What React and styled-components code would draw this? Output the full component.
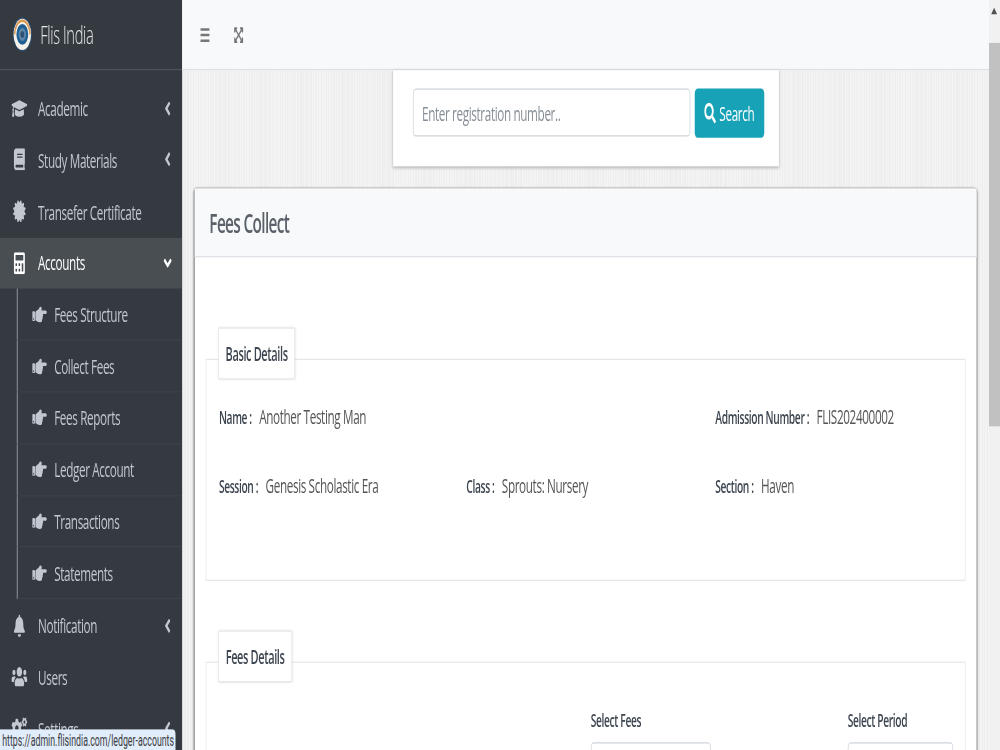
import React from 'react';
import styled, { createGlobalStyle } from 'styled-components';
import {
  FaGraduationCap, FaBook, FaCertificate, FaCalculator, FaHandPointRight, FaBell, FaUsers, FaCogs,
  FaAngleLeft, FaAngleDown, FaBars, FaExpandArrowsAlt, FaSearch,
} from 'react-icons/fa';

const GlobalStyle = createGlobalStyle`
  html, body {
    margin: 0;
    height: 100%;
    overflow: hidden;
    background: #f0f0f0;
  }
  * { box-sizing: border-box; }
`;

// the screenshot is a 1366x577 page squeezed into 1000x750
const Frame = styled.div`
  width: 1366px;
  height: 577px;
  display: grid;
  grid-template-columns: 249px 1fr 15px;
  overflow: hidden;
  position: relative;
  transform: scale(0.73206, 1.2998);
  transform-origin: 0 0;
  font-family: "Open Sans", "Liberation Sans", sans-serif;
  font-size: 16px;
  letter-spacing: -0.5px;
  color: #555;
`;

const Sidebar = styled.aside`
  background: #343a40;
  color: #c2c7d0;
  overflow: hidden;
  box-shadow: 0 2px 6px rgba(0, 0, 0, 0.3);
`;

const Brand = styled.div`
  height: 54px;
  display: flex;
  align-items: center;
  gap: 11px;
  padding-left: 17px;
  border-bottom: 1px solid #4b545c;
  font-size: 20px;
  font-weight: 300;
  color: #e4e7ea;
`;

const Nav = styled.nav`
  margin-top: 9.2px;
`;

const NavItem = styled.div`
  height: 39.8px;
  display: flex;
  align-items: center;
  padding: 0 14px 0 15px;
  background: ${p => (p.$active ? '#494e53' : 'transparent')};
  color: ${p => (p.$active ? '#fff' : '#c2c7d0')};
  svg.main { width: 23px; height: 17px; margin-right: 14px; flex: none; }
  svg.caret { width: 12px; height: 17px; margin-left: auto; }
`;

const SubMenu = styled.div`
  margin-left: 23px;
  border-left: 1px solid #aeb4bb;
`;

const SubItem = styled.div`
  height: 39.8px;
  display: flex;
  align-items: center;
  padding-left: 20px;
  border-bottom: 1px solid #3c4248;
  svg { width: 20px; height: 16px; margin-right: 10px; flex: none; }
`;

const Main = styled.main`
  min-width: 0;
  background: repeating-linear-gradient(
    90deg,
    #eeeeee 0 2px,
    #f4f4f4 2px 3px,
    #efefef 3px 5px,
    #f3f3f3 5px 7px
  );
`;

const Topbar = styled.header`
  height: 54px;
  display: flex;
  align-items: center;
  gap: 32px;
  padding-left: 24px;
  background: #f8f9fa;
  border-bottom: 1px solid #dee2e6;
  color: #777;
  svg { width: 14px; height: 14px; }
`;

const SearchCard = styled.form`
  width: 527px;
  height: 74px;
  margin: 0 auto;
  padding: 14px 20px 0 27px;
  display: flex;
  gap: 6px;
  background: #fff;
  box-shadow: 0 1px 3px rgba(0, 0, 0, 0.25);
`;

const SearchInput = styled.input`
  width: 379px;
  height: 37px;
  padding: 0 12px;
  border: 1px solid #ced4da;
  border-radius: 4px;
  font: inherit;
  letter-spacing: inherit;
  &::placeholder { color: #868e96; opacity: 1; }
`;

const SearchButton = styled.button`
  width: 95px;
  height: 38px;
  display: flex;
  align-items: center;
  justify-content: center;
  gap: 5px;
  border: 0;
  border-radius: 4px;
  background: #17a2b8;
  color: #fff;
  font: inherit;
  letter-spacing: inherit;
`;

const Card = styled.section`
  margin: 17px 17px 0 17px;
  background: #fff;
  border-radius: 4px 4px 0 0;
  box-shadow: 0 0 2px rgba(0, 0, 0, 0.45), 0 1px 3px rgba(0, 0, 0, 0.3);
`;

const CardHeader = styled.div`
  height: 53px;
  display: flex;
  align-items: center;
  padding-left: 20px;
  background: #f8f9fa;
  border-bottom: 1px solid #dee2e6;
  font-size: 21px;
  font-weight: 600;
  letter-spacing: -0.9px;
  color: #5a6169;
`;

const CardBody = styled.div`
  padding: 78px 15px 0;
`;

const Group = styled.div`
  height: ${p => p.$height};
  margin-bottom: 62px;
  border: 1px solid #e6e8ea;
`;

const Legend = styled.div`
  width: ${p => p.$width};
  height: 40px;
  margin: -25.5px 0 0 16px;
  display: flex;
  align-items: center;
  justify-content: center;
  background: #fff;
  border: 1px solid #e6e8ea;
  border-radius: 2px;
  box-shadow: 0 0 2px rgba(0, 0, 0, 0.08);
  font-size: 15px;
  font-weight: 600;
  color: #3d4650;
`;

const Details = styled.div`
  display: grid;
  grid-template-columns: 338px 340px 1fr;
  grid-auto-rows: 53px;
  padding: 1.5px 0 0 17px;
  align-items: center;
`;

const Detail = styled.div`
  grid-column: ${p => p.$col || 'auto'};
  display: flex;
  align-items: baseline;
  gap: 10px;
  white-space: nowrap;
  b { font-size: 14px; font-weight: 600; color: #3d4650; }
`;

const FeeFields = styled.div`
  display: grid;
  grid-template-columns: 351px 144px;
  margin-left: 525px;
  padding-top: 16px;
`;

const FieldLabel = styled.label`
  display: block;
  height: 30.5px;
  line-height: 26px;
  font-size: 14px;
  font-weight: 600;
  color: #3d4650;
`;

const SelectBox = styled.div`
  width: ${p => p.$width};
  height: 38px;
  border: 1px solid #ced4da;
  border-radius: 4px;
`;

const Scrollbar = styled.div`
  position: relative;
  background: #f1f1f1;
`;

const Thumb = styled.div`
  margin-top: 33px;
  height: 295px;
  background: #c1c1c1;
`;

const Arrow = styled.span`
  position: absolute;
  left: 3px;
  ${p => (p.$down ? 'bottom: 3px;' : 'top: 6px;')}
  border-left: 4px solid transparent;
  border-right: 4px solid transparent;
  ${p => (p.$down ? 'border-top' : 'border-bottom')}: 5px solid #505050;
`;

const StatusTip = styled.div`
  position: absolute;
  left: 0;
  bottom: 0;
  width: 240px;
  height: 16px;
  padding-left: 3px;
  background: #e2edfb;
  border-top-right-radius: 4px;
  font-family: "Roboto", sans-serif;
  font-size: 12px;
  line-height: 18px;
  letter-spacing: 0;
  color: #3c4043;
  white-space: nowrap;
`;

const Logo = () => (
  <svg width="27" height="27" viewBox="0 0 54 54" style={{ flex: 'none' }}>
    <circle cx="27" cy="27" r="26.5" fill="#2b4a68" />
    <circle cx="27" cy="27" r="24" fill="#f4f2ea" />
    <path d="M6 27 A21 21 0 0 1 48 27" fill="none" stroke="#dd9a55" strokeWidth="4" />
    <circle cx="27" cy="27" r="16" fill="#1f5f93" />
    <circle cx="27" cy="27" r="10" fill="#5b86a9" />
    <circle cx="27" cy="27" r="5" fill="#2c4e70" />
  </svg>
);

const topItems = [
  { label: 'Academic', icon: FaGraduationCap, caret: true },
  { label: 'Study Materials', icon: FaBook, caret: true },
  { label: 'Transefer Certificate', icon: FaCertificate },
];
const subItems = ['Fees Structure', 'Collect Fees', 'Fees Reports', 'Ledger Account', 'Transactions', 'Statements'];
const bottomItems = [
  { label: 'Notification', icon: FaBell, caret: true },
  { label: 'Users', icon: FaUsers },
  { label: 'Settings', icon: FaCogs, caret: true },
];

const MenuRow = ({ item }) => (
  <NavItem>
    <item.icon className="main" />
    {item.label}
    {item.caret && <FaAngleLeft className="caret" />}
  </NavItem>
);

export default function App() {
  return (
    <Frame>
      <GlobalStyle />
      <Sidebar>
        <Brand><Logo />Flis India</Brand>
        <Nav>
          {topItems.map(item => <MenuRow key={item.label} item={item} />)}
          <NavItem $active>
            <FaCalculator className="main" />
            Accounts
            <FaAngleDown className="caret" />
          </NavItem>
          <SubMenu>
            {subItems.map(label => (
              <SubItem key={label}><FaHandPointRight preserveAspectRatio="none" />{label}</SubItem>
            ))}
          </SubMenu>
          {bottomItems.map(item => <MenuRow key={item.label} item={item} />)}
        </Nav>
      </Sidebar>
      <Main>
        <Topbar>
          <FaBars />
          <FaExpandArrowsAlt />
        </Topbar>
        <SearchCard>
          <SearchInput placeholder="Enter registration number.." />
          <SearchButton type="button"><FaSearch />Search</SearchButton>
        </SearchCard>
        <Card>
          <CardHeader>Fees Collect</CardHeader>
          <CardBody>
            <Group $height="171px">
              <Legend $width="105px">Basic Details</Legend>
              <Details>
                <Detail><b>Name :</b>Another Testing Man</Detail>
                <Detail $col="3"><b>Admission Number :</b>FLIS202400002</Detail>
                <Detail><b>Session :</b>Genesis Scholastic Era</Detail>
                <Detail><b>Class :</b>Sprouts: Nursery</Detail>
                <Detail><b>Section :</b>Haven</Detail>
              </Details>
            </Group>
            <Group $height="200px">
              <Legend $width="101px">Fees Details</Legend>
              <FeeFields>
                <div>
                  <FieldLabel>Select Fees</FieldLabel>
                  <SelectBox $width="164px" />
                </div>
                <div>
                  <FieldLabel>Select Period</FieldLabel>
                  <SelectBox $width="144px" />
                </div>
              </FeeFields>
            </Group>
          </CardBody>
        </Card>
      </Main>
      <Scrollbar>
        <Arrow />
        <Thumb />
        <Arrow $down />
      </Scrollbar>
      <StatusTip>https://admin.flisindia.com/ledger-accounts</StatusTip>
    </Frame>
  );
}
